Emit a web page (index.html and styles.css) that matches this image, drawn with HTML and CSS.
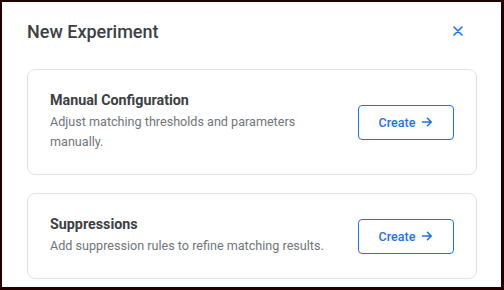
FILE: index.html
```html
<!DOCTYPE html>
<html lang="en">
<head>
<meta charset="utf-8">
<link rel="stylesheet" href="styles.css">
</head>
<body>
<div class="dialog">
  <div class="header">
    <h1 class="title">New Experiment</h1>
    <button class="close" aria-label="Close">
      <svg width="10" height="10" viewBox="0 0 10 10"><path d="M1 1L9 9M9 1L1 9" stroke="#1a73e8" stroke-width="1.6" stroke-linecap="round"/></svg>
    </button>
  </div>
  <div class="list">
    <div class="card">
      <div class="text">
        <div class="name">Manual Configuration</div>
        <div class="desc">Adjust matching thresholds and parameters manually.</div>
      </div>
      <button class="create">Create
        <svg width="12" height="12" viewBox="0 0 12 12"><path d="M1.5 6H10.2M6.5 2.3L10.2 6L6.5 9.7" fill="none" stroke="#1a73e8" stroke-width="1.6" stroke-linecap="round" stroke-linejoin="round"/></svg>
      </button>
    </div>
    <div class="card">
      <div class="text">
        <div class="name">Suppressions</div>
        <div class="desc">Add suppression rules to refine matching results.</div>
      </div>
      <button class="create">Create
        <svg width="12" height="12" viewBox="0 0 12 12"><path d="M1.5 6H10.2M6.5 2.3L10.2 6L6.5 9.7" fill="none" stroke="#1a73e8" stroke-width="1.6" stroke-linecap="round" stroke-linejoin="round"/></svg>
      </button>
    </div>
  </div>
</div>
</body>
</html>
```
FILE: styles.css
```css
html, body { margin: 0; padding: 0; }
body {
  background: #220000;
  width: 504px;
  height: 290px;
  font-family: Roboto, "Liberation Sans", sans-serif;
}
.dialog {
  box-sizing: border-box;
  width: 499px;
  height: 285px;
  margin: 2px 3px 3px 2px;
  background: #fff;
  padding: 17px 24px 0 25px;
}
.header {
  display: flex;
  align-items: center;
  justify-content: space-between;
  height: 24px;
  margin-bottom: 26px;
}
.title {
  margin: 0;
  font-size: 18px;
  font-weight: 500;
  color: #3c4043;
}
.close {
  border: 0;
  background: none;
  padding: 0;
  margin-right: 14px;
  width: 10px;
  height: 10px;
  display: flex;
}
.list {
  display: flex;
  flex-direction: column;
  gap: 18px;
}
.card {
  border: 1px solid #dfe1e5;
  border-radius: 8px;
  padding: 22px 22px 22px 22px;
  display: flex;
  align-items: center;
  justify-content: space-between;
  gap: 24px;
}
.name {
  font-size: 14.3px;
  font-weight: 700;
  color: #3c4043;
  line-height: 16px;
  margin-bottom: 4px;
}
.desc {
  font-size: 12.6px;
  color: #70757a;
  line-height: 20px;
}
.create {
  flex: none;
  box-sizing: border-box;
  width: 96px;
  height: 35px;
  border: 1px solid #1a73e8;
  border-radius: 4px;
  background: #fff;
  color: #1a73e8;
  font-family: Roboto, "Liberation Sans", sans-serif;
  font-size: 12.5px;
  font-weight: 500;
  display: flex;
  align-items: center;
  justify-content: center;
  gap: 6px;
  padding: 0;
}
```
